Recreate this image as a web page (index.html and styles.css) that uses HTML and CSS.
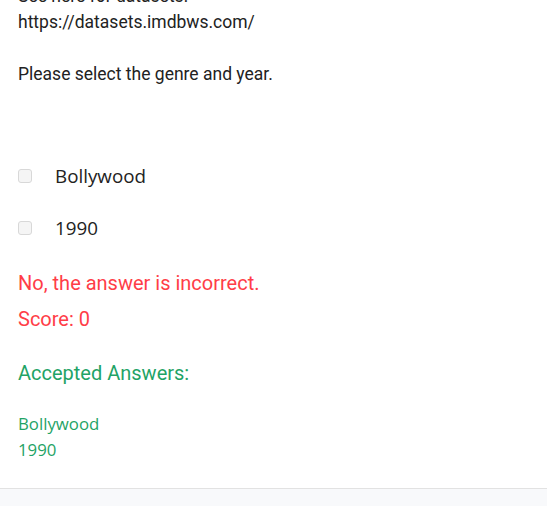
FILE: index.html
```html
<!DOCTYPE html>
<html>
<head>
<meta charset="utf-8">
<link rel="stylesheet" href="styles.css">
</head>
<body>
<div class="card">
  <div class="question">
    <p class="line">See here for datasets:</p>
    <p class="line">https://datasets.imdbws.com/</p>
    <p class="line">&nbsp;</p>
    <p class="line">Please select the genre and year.</p>
  </div>
  <ul class="options">
    <li class="option"><span class="box"></span><span class="label">Bollywood</span></li>
    <li class="option"><span class="box"></span><span class="label">1990</span></li>
  </ul>
  <p class="wrong">No, the answer is incorrect.</p>
  <p class="score">Score: 0</p>
  <p class="accepted">Accepted Answers:</p>
  <div class="answers">
    <div class="answer">Bollywood</div>
    <div class="answer">1990</div>
  </div>
</div>
</body>
</html>
```

FILE: styles.css
```css
html, body {
  margin: 0;
  padding: 0;
  background: #f8f9fb;
}
body {
  font-family: Roboto, "Liberation Sans", sans-serif;
  color: #222222;
  overflow: hidden;
  height: 506px;
}
.card {
  background: #ffffff;
  padding: 0 18px;
  margin-top: -17px;
  height: 506px;
  box-sizing: border-box;
  border-bottom: 1px solid #e2e2e2;
}
.question {
  font-size: 17.5px;
  line-height: 26px;
}
.line {
  margin: 0;
}
.options {
  list-style: none;
  margin: 63px 0 0 0;
  padding: 0;
}
.option {
  display: flex;
  align-items: center;
  height: 52px;
}
.box {
  width: 12px;
  height: 12px;
  border: 1px solid #d8d8d8;
  border-radius: 3px;
  background: #f5f5f5;
  flex: none;
}
.label {
  margin-left: 23px;
  font-family: "Open Sans", "Noto Sans", sans-serif;
  font-size: 18.8px;
  color: #222222;
}
.wrong,
.score {
  margin: 0;
  color: #ff3d47;
  font-size: 20px;
  line-height: 36px;
}
.wrong {
  margin-top: 11px;
}
.accepted {
  margin: 18px 0 0 0;
  color: #1fa366;
  font-size: 20px;
  line-height: 36px;
}
.answers {
  margin-top: 20px;
  color: #1fa366;
  font-family: "Open Sans", "Noto Sans", sans-serif;
  font-size: 16.8px;
  line-height: 26px;
}
```
